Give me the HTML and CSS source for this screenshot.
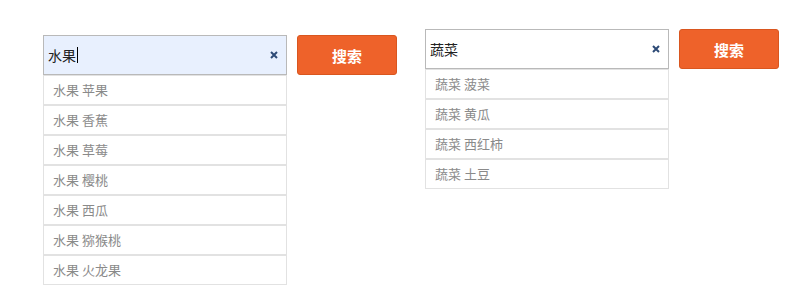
FILE: index.html
```html
<!DOCTYPE html>
<html lang="zh-CN">
<head>
    <meta charset="UTF-8">
    <meta name="viewport" content="width=device-width, initial-scale=1.0">
    <title>搜索建议</title>
    <link rel="stylesheet" href="styles.css">
</head>
<body>
    <div class="page">
        <div class="search search-low">
            <div class="bar">
                <div class="field focused">
                    <span class="value">水果</span><span class="caret"></span>
                    <svg class="clear" viewBox="0 0 8 8"><path d="M1 1L7 7M7 1L1 7"/></svg>
                </div>
                <button type="button" class="go">搜索</button>
            </div>
            <ul class="suggest">
                <li>水果 苹果</li>
                <li>水果 香蕉</li>
                <li>水果 草莓</li>
                <li>水果 樱桃</li>
                <li>水果 西瓜</li>
                <li>水果 猕猴桃</li>
                <li>水果 火龙果</li>
            </ul>
        </div>

        <div class="search">
            <div class="bar">
                <div class="field">
                    <span class="value">蔬菜</span>
                    <svg class="clear" viewBox="0 0 8 8"><path d="M1 1L7 7M7 1L1 7"/></svg>
                </div>
                <button type="button" class="go">搜索</button>
            </div>
            <ul class="suggest">
                <li>蔬菜 菠菜</li>
                <li>蔬菜 黄瓜</li>
                <li>蔬菜 西红柿</li>
                <li>蔬菜 土豆</li>
            </ul>
        </div>
    </div>
</body>
</html>
```

FILE: styles.css
```css
body {
    margin: 0;
    background: #fff;
    font-family: "Noto Sans CJK SC", "Liberation Sans", sans-serif;
}
.page {
    display: flex;
    align-items: flex-start;
    gap: 28px;
    padding: 29px 0 0 43px;
}
.search-low {
    margin-top: 6px;
}
.bar {
    display: flex;
    gap: 10px;
}
.field {
    width: 244px;
    height: 40px;
    box-sizing: border-box;
    border: 1px solid #b9b9b9;
    background: #fff;
    display: flex;
    align-items: center;
    padding: 0 8px 0 4px;
    font-size: 14px;
    color: #222;
}
.field.focused {
    background: #e8f0fe;
}
.caret {
    display: inline-block;
    width: 1px;
    height: 16px;
    background: #000;
    margin-left: 1px;
}
.clear {
    margin-left: auto;
    width: 8px;
    height: 8px;
    stroke: #2d4a76;
    stroke-width: 2;
    fill: none;
}
.go {
    width: 100px;
    height: 40px;
    border: 1px solid #d9561f;
    border-radius: 3px;
    background: #ee622a;
    color: #fff;
    font-family: inherit;
    font-size: 15px;
    font-weight: bold;
    cursor: pointer;
}
.suggest {
    list-style: none;
    margin: 0;
    padding: 0;
    width: 244px;
}
.suggest li {
    height: 30px;
    box-sizing: border-box;
    border: 1px solid #e2e2e2;
    padding-left: 9px;
    line-height: 28px;
    font-size: 13px;
    color: #8a8a8a;
    background: #fff;
}
```
